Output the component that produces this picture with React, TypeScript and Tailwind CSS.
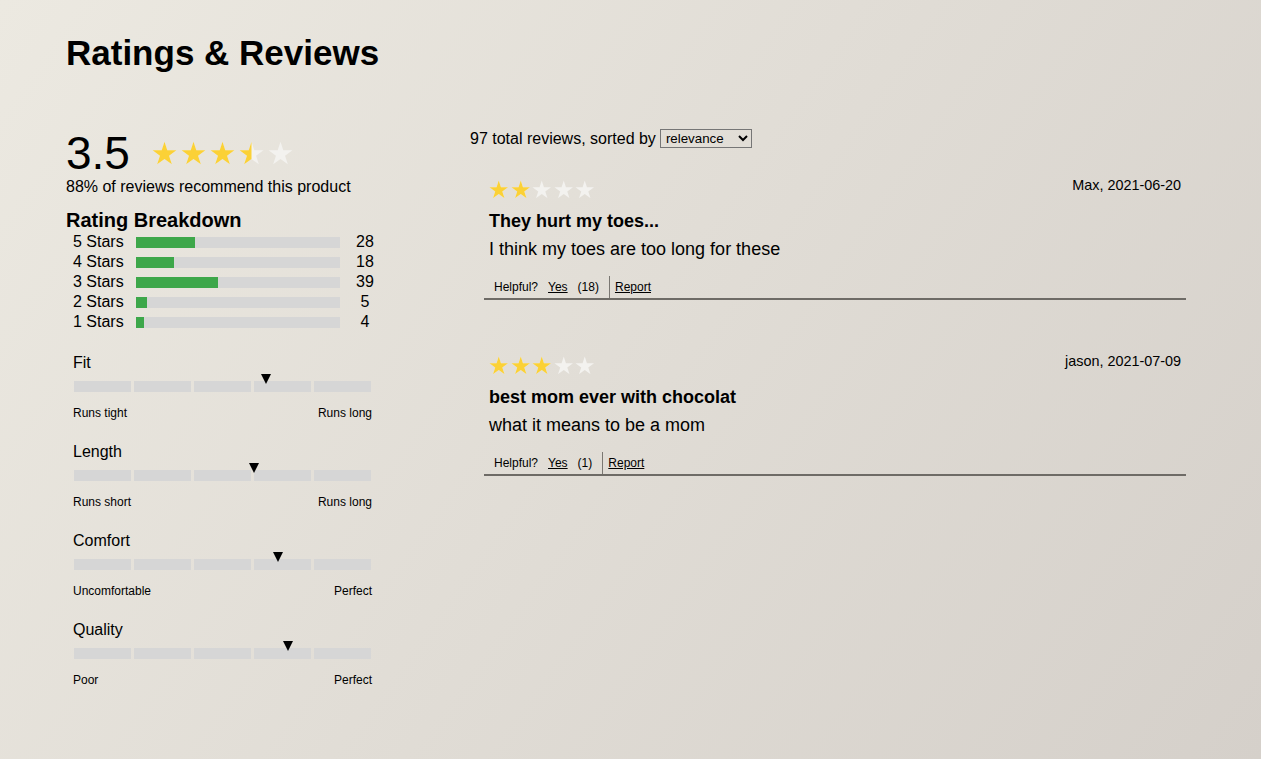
import React from "react";

const STAR =
  "12,0.6 14.69,8.89 23.41,8.89 16.36,14.02 19.05,22.31 12,17.18 4.95,22.31 7.64,14.02 0.59,8.89 9.31,8.89";

const GOLD = "#fbd136";
const EMPTY = "#f3f2ef";

const Star = ({ fill, size }: { fill: number; size: number }) => {
  const id = React.useId();
  return (
    <svg width={size} height={size * 0.96} viewBox="0 0 24 23" className="block">
      <defs>
        <clipPath id={id}>
          <rect x="0" y="0" width={24 * fill} height="23" />
        </clipPath>
      </defs>
      <polygon points={STAR} fill={EMPTY} />
      <polygon points={STAR} fill={GOLD} clipPath={`url(#${id})`} />
    </svg>
  );
};

const Stars = ({ value, size, gap }: { value: number; size: number; gap: string }) => (
  <div className={`flex items-center ${gap}`}>
    {[0, 1, 2, 3, 4].map((i) => (
      <Star key={i} size={size} fill={Math.max(0, Math.min(1, value - i))} />
    ))}
  </div>
);

const breakdown = [
  { label: "5 Stars", count: 28 },
  { label: "4 Stars", count: 18 },
  { label: "3 Stars", count: 39 },
  { label: "2 Stars", count: 5 },
  { label: "1 Stars", count: 4 },
];

const characteristics = [
  { name: "Fit", low: "Runs tight", high: "Runs long", pos: 64.3 },
  { name: "Length", low: "Runs short", high: "Runs long", pos: 60.4 },
  { name: "Comfort", low: "Uncomfortable", high: "Perfect", pos: 68.5 },
  { name: "Quality", low: "Poor", high: "Perfect", pos: 71.7 },
];

const reviews = [
  {
    rating: 2,
    who: "Max, 2021-06-20",
    title: "They hurt my toes...",
    body: "I think my toes are too long for these",
    helpful: 18,
  },
  {
    rating: 3,
    who: "jason, 2021-07-09",
    title: "best mom ever with chocolat",
    body: "what it means to be a mom",
    helpful: 1,
  },
];

const Review = ({ r, first }: { r: (typeof reviews)[number]; first: boolean }) => (
  <div className={first ? "" : "mt-[52px]"}>
    <div className="flex justify-between px-[5px]">
      <div className="flex h-[26px] items-center">
        <Stars value={r.rating} size={19.5} gap="gap-[2px]" />
      </div>
      <span className="pt-[1px] text-[14.4px] leading-[17px]">{r.who}</span>
    </div>
    <h3 className="mt-[8.5px] px-[5px] text-[18px] font-bold leading-[21px]">{r.title}</h3>
    <p className="mt-[7px] px-[5px] text-[18px] leading-[21px]">{r.body}</p>
    <div className="mt-[16.5px] flex items-center border-b-2 border-[#6e6b66] text-xs">
      <div className="flex h-[22px] items-center border-r border-[#7a7772] px-[10px]">
        <span>Helpful?</span>
        <span className="ml-[10px] underline">Yes</span>
        <span className="ml-[10px]">({r.helpful})</span>
      </div>
      <span className="ml-[5px] underline">Report</span>
    </div>
  </div>
);

export default function App() {
  return (
    <div className="min-h-screen bg-[linear-gradient(125deg,#ece9e1,#d5d0ca)] px-[66px] pt-[33px] font-['Liberation_Sans',Arial,sans-serif] text-black">
      <h1 className="text-[35px] font-bold leading-[40px]">Ratings &amp; Reviews</h1>

      <div className="mt-[56px] flex">
        <section className="w-[404px] shrink-0">
          <div className="flex h-[48px] items-center">
            <span className="text-[46px] leading-none">3.5</span>
            <div className="ml-[22px]">
              <Stars value={3.5} size={25} gap="gap-[4px]" />
            </div>
          </div>
          <p className="mt-[1px] text-base leading-[18px]">88% of reviews recommend this product</p>

          <h2 className="mt-[13px] text-[20px] font-bold leading-[23px]">Rating Breakdown</h2>
          <div>
            {breakdown.map((b) => (
              <div key={b.label} className="flex h-5 items-center text-base leading-5">
                <span className="w-[70px] pl-[7px]">{b.label}</span>
                <div className="h-[11px] w-[204px] bg-[#d6d6d6]">
                  <div className="h-full bg-[#3da74a]" style={{ width: `${(b.count / 97) * 100}%` }} />
                </div>
                <span className="w-[50px] text-center">{b.count}</span>
              </div>
            ))}
          </div>

          <div className="ml-[7px] mt-[22px] w-[299px]">
            {characteristics.map((c, i) => (
              <div key={c.name} className={i === 0 ? "" : "mt-[23px]"}>
                <div className="text-base leading-[18px]">{c.name}</div>
                <div className="relative ml-[1px] mt-[9px] flex gap-[3px]">
                  {[0, 1, 2, 3, 4].map((s) => (
                    <div key={s} className="h-[11px] w-[57px] bg-[#d6d6d6]" />
                  ))}
                  <div
                    className="absolute top-[-7px] h-0 w-0 -translate-x-1/2 border-x-[5px] border-t-[10px] border-x-transparent border-t-black"
                    style={{ left: `${c.pos}%` }}
                  />
                </div>
                <div className="mt-[14px] flex justify-between text-xs leading-[14px]">
                  <span>{c.low}</span>
                  <span>{c.high}</span>
                </div>
              </div>
            ))}
          </div>
        </section>

        <section className="w-[716px] shrink-0">
          <div className="flex items-center text-base leading-[18px]">
            <span>97 total reviews, sorted by</span>
            <select
              defaultValue="relevance"
              className="ml-[4px] h-[19px] w-[92px] border border-[#767676] pl-[1px] text-[13.33px] leading-none"
            >
              <option value="relevance">relevance</option>
              <option value="newest">newest</option>
              <option value="helpful">helpful</option>
            </select>
          </div>

          <div className="ml-[14px] mt-[28px] w-[702px]">
            {reviews.map((r, i) => (
              <Review key={r.who} r={r} first={i === 0} />
            ))}
          </div>
        </section>
      </div>
    </div>
  );
}
